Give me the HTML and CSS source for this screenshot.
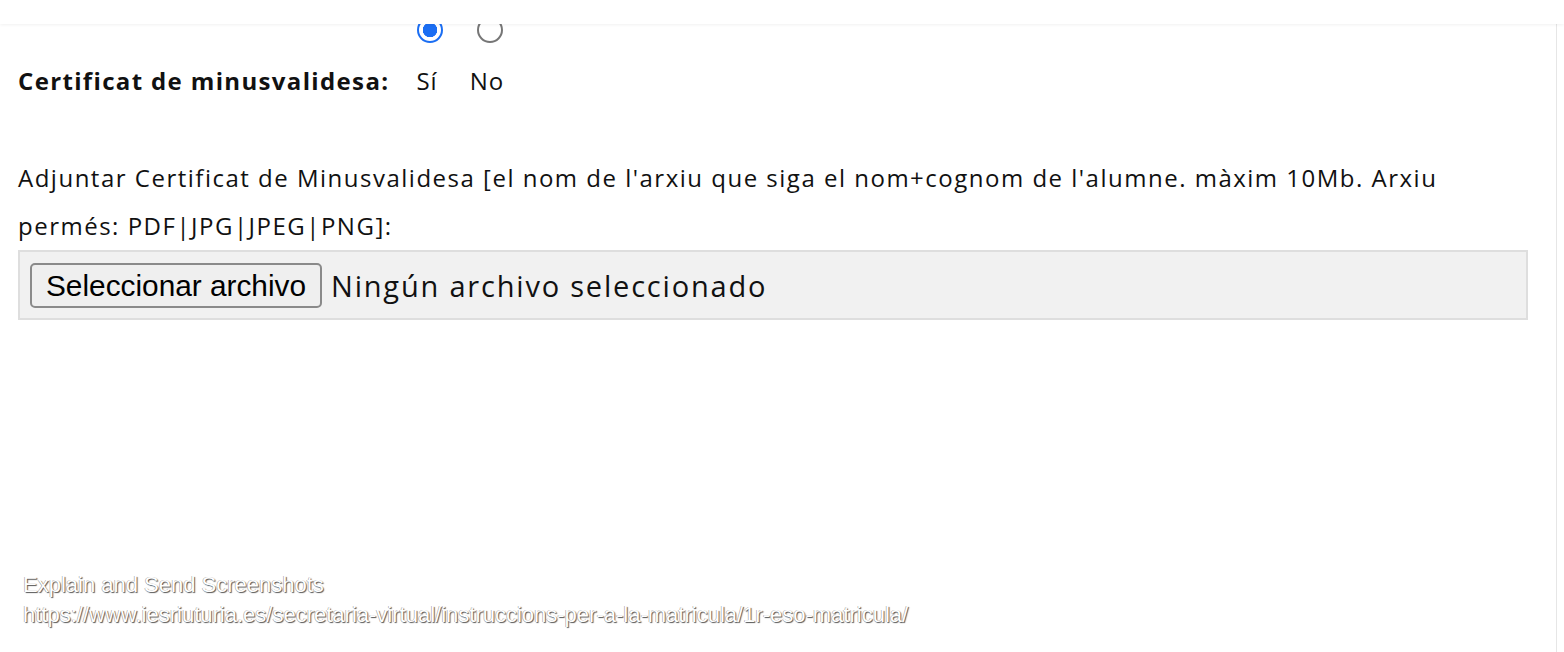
FILE: index.html
```html
<!doctype html>
<html>
  <head>
    <meta charset="UTF-8">
    <meta name="viewport" content="width=device-width, initial-scale=1">
    <title>1r ESO matrícula</title>
    <link rel="stylesheet" href="styles.css">
  </head>

  <body>
    <div class="topbar"></div>

    <div class="page">
      <form class="form">
        <div class="field-inline">
          <span class="label">Certificat de minusvalidesa:</span>
          <div class="options">
            <label class="option">
              <input type="radio" name="minus" value="si" checked>
              <span>Sí</span>
            </label>
            <label class="option">
              <input type="radio" name="minus" value="no">
              <span>No</span>
            </label>
          </div>
        </div>

        <div class="field">
          <p class="help">Adjuntar Certificat de Minusvalidesa [el nom de l'arxiu que siga el nom+cognom de l'alumne. màxim 10Mb. Arxiu permés: PDF|JPG|JPEG|PNG]:</p>
          <div class="filebox">
            <span class="filebtn">Seleccionar archivo</span>
            <span class="filename">Ningún archivo seleccionado</span>
          </div>
        </div>
      </form>

      <div class="overlay">
        <div>Explain and Send Screenshots</div>
        <div>https://www.iesriuturia.es/secretaria-virtual/instruccions-per-a-la-matricula/1r-eso-matricula/</div>
      </div>
    </div>
  </body>
</html>
```

FILE: styles.css
```css
html, body {
  margin: 0;
  padding: 0;
  background: white;
}

body {
  font-family: "Open Sans", "DejaVu Sans", sans-serif;
  color: #111;
  height: 652px;
  overflow: hidden;
}

.topbar {
  position: fixed;
  top: 0;
  left: 0;
  right: 0;
  height: 24px;
  background: white;
  box-shadow: 0 1px 3px rgba(0, 0, 0, 0.06);
  z-index: 2;
}

.page {
  width: 1557px;
  height: 652px;
  border-right: 1px solid #e6e6e6;
  box-sizing: border-box;
  padding: 0 0 0 18px;
  display: flex;
  flex-direction: column;
}

.form {
  width: 1510px;
  padding-top: 17px;
}

.field-inline {
  display: flex;
  align-items: flex-end;
}

.label {
  font-weight: 700;
  font-size: 24px;
  line-height: 30px;
  width: 389px;
  letter-spacing: 1.35px;
}

.options {
  display: flex;
  gap: 14px;
}

.option {
  display: flex;
  flex-direction: column;
  align-items: center;
  font-size: 24px;
  line-height: 30px;
  gap: 23px;
  width: 46px;
  letter-spacing: 1px;
}

.option span {
  margin-left: -6px;
}

.option input {
  appearance: none;
  -webkit-appearance: none;
  margin: 0;
  width: 26px;
  height: 26px;
  border-radius: 50%;
  border: 2px solid #767676;
  box-sizing: border-box;
  background: white;
}

.option input:checked {
  border-color: #1b6ef3;
  background: radial-gradient(circle, #1b6ef3 0 7px, white 7.5px);
}

.help {
  margin: 58px 0 0 0;
  font-size: 24px;
  line-height: 48px;
  letter-spacing: 1.5px;
}

.filebox {
  display: flex;
  align-items: center;
  height: 70px;
  box-sizing: border-box;
  background: #f1f1f1;
  border: 2px solid #dedede;
  padding: 0 10px;
}

.filebtn {
  font-family: "Liberation Sans", Arial, sans-serif;
  font-size: 29.8px;
  line-height: 41px;
  padding: 0 14px;
  background: #efefef;
  border: 2px solid #8a8a8a;
  border-radius: 5px;
  color: #000;
}

.filename {
  margin-left: 9px;
  font-size: 29px;
  letter-spacing: 1.8px;
  color: #111;
}

.overlay {
  margin-top: auto;
  margin-bottom: 22px;
  margin-left: 5px;
  font-family: "Liberation Sans", Arial, sans-serif;
  font-size: 22px;
  line-height: 30px;
  color: white;
  text-shadow: 1px 1px 1px #555, -0.5px -0.5px 0 #999;
}
```
